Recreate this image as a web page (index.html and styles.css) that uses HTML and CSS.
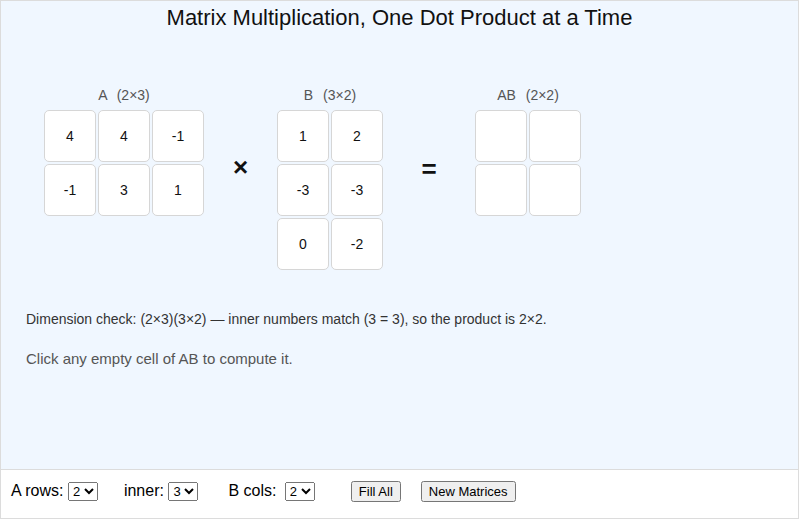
FILE: index.html
```html
<!DOCTYPE html>
<html lang="en">
<head>
  <meta charset="UTF-8">
  <meta name="viewport" content="width=device-width, initial-scale=1.0">
  <title>Matrix Multiplication</title>
  <link rel="stylesheet" href="styles.css">
</head>
<body>
  <div class="stage">
    <h1>Matrix Multiplication, One Dot Product at a Time</h1>

    <div class="matrices">
      <div class="matrix">
        <div class="label">A <span>(2×3)</span></div>
        <div class="grid cols3">
          <div class="cell">4</div><div class="cell">4</div><div class="cell">-1</div>
          <div class="cell">-1</div><div class="cell">3</div><div class="cell">1</div>
        </div>
      </div>

      <div class="op times">×</div>

      <div class="matrix">
        <div class="label">B <span>(3×2)</span></div>
        <div class="grid cols2">
          <div class="cell">1</div><div class="cell">2</div>
          <div class="cell">-3</div><div class="cell">-3</div>
          <div class="cell">0</div><div class="cell">-2</div>
        </div>
      </div>

      <div class="op equals">=</div>

      <div class="matrix">
        <div class="label">AB <span>(2×2)</span></div>
        <div class="grid cols2" id="product">
          <div class="cell empty"></div><div class="cell empty"></div>
          <div class="cell empty"></div><div class="cell empty"></div>
        </div>
      </div>
    </div>

    <p class="check">Dimension check: (2×3)(3×2) — inner numbers match (3 = 3), so the product is 2×2.</p>
    <p class="hint">Click any empty cell of AB to compute it.</p>
  </div>

  <div class="controls">
    <label class="first">A rows: <select><option>1</option><option selected>2</option><option>3</option></select></label>
    <label class="second">inner: <select><option>1</option><option>2</option><option selected>3</option></select></label>
    <label class="third">B cols: <select><option>1</option><option selected>2</option><option>3</option></select></label>
    <button class="fill">Fill All</button>
    <button>New Matrices</button>
  </div>

  <script>
    // product cells fill in on click
    const A = [[4, 4, -1], [-1, 3, 1]];
    const B = [[1, 2], [-3, -3], [0, -2]];
    document.querySelectorAll('#product .cell').forEach((cell, i) => {
      cell.addEventListener('click', () => {
        const r = Math.floor(i / 2), c = i % 2;
        let sum = 0;
        for (let k = 0; k < 3; k++) sum += A[r][k] * B[k][c];
        cell.textContent = sum;
      });
    });
  </script>
</body>
</html>
```

FILE: styles.css
```css
body {
  margin: 0;
  font-family: "Liberation Sans", Arial, sans-serif;
}
.stage {
  width: 799px;
  height: 470px;
  box-sizing: border-box;
  border: 1px solid #dcdcdc;
  background-color: #f0f7ff;
  padding-top: 5px;
}
h1 {
  margin: 0;
  font-size: 22px;
  font-weight: normal;
  line-height: 24px;
  text-align: center;
  color: #111;
}
.matrices {
  display: flex;
  align-items: flex-start;
  margin-top: 57px;
  padding-left: 43px;
}
.label {
  font-size: 14px;
  line-height: 16px;
  color: #555;
  text-align: center;
  margin-bottom: 7px;
}
.label span {
  margin-left: 6px;
}
.grid {
  display: grid;
  gap: 2px;
}
.cols3 {
  grid-template-columns: repeat(3, 52px);
}
.cols2 {
  grid-template-columns: repeat(2, 52px);
}
.cell {
  height: 52px;
  box-sizing: border-box;
  border: 1px solid #d6d6d6;
  border-radius: 5px;
  background-color: white;
  display: flex;
  align-items: center;
  justify-content: center;
  font-size: 14px;
  color: #111;
}
.empty {
  cursor: pointer;
}
.op {
  font-size: 26px;
  line-height: 30px;
  font-weight: bold;
  text-align: center;
  color: #111;
}
.times {
  width: 73px;
  margin-top: 65px;
}
.equals {
  width: 92px;
  margin-top: 67px;
}
.check {
  margin: 41px 0 0 25px;
  font-size: 14px;
  line-height: 17px;
  color: #333;
}
.hint {
  margin: 22px 0 0 25px;
  font-size: 15px;
  line-height: 18px;
  color: #555;
}
.controls {
  width: 799px;
  height: 49px;
  box-sizing: border-box;
  border: 1px solid #dcdcdc;
  border-top: none;
  padding: 4px 0 10px 10px;
  font-size: 16px;
  display: flex;
  align-items: center;
}
.controls label {
  margin-right: 26px;
}
.controls label.second {
  margin-right: 30px;
}
.controls label.third {
  margin-right: 36px;
}
.controls label.third select {
  margin-left: 4px;
}
.controls select {
  font-size: 13px;
  font-family: "Liberation Sans", Arial, sans-serif;
}
.controls button {
  font-size: 13px;
  font-family: "Liberation Sans", Arial, sans-serif;
  margin-right: 20px;
}
```
